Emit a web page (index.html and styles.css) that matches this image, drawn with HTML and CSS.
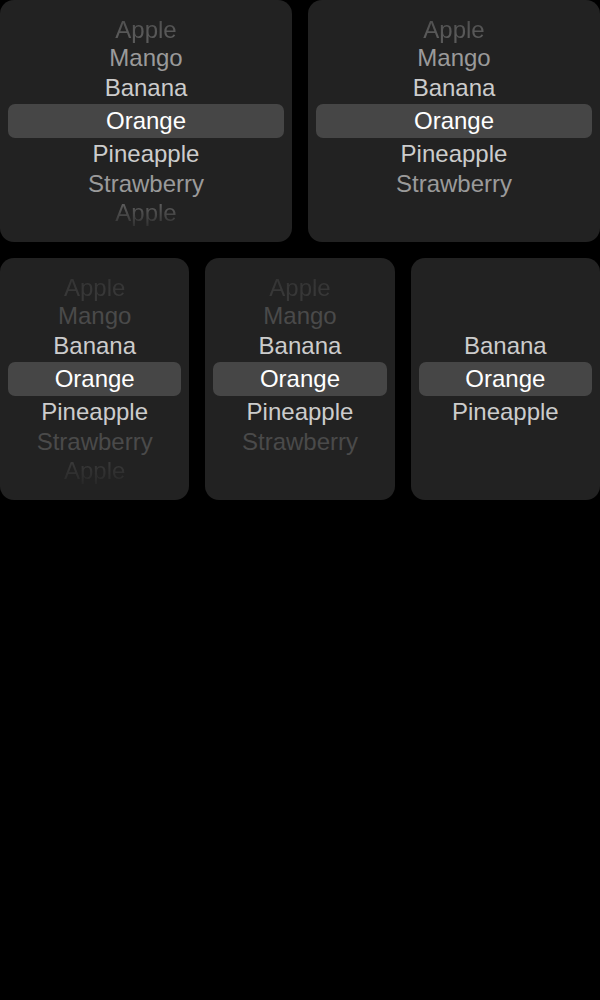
FILE: index.html
```html
<!DOCTYPE html>
<html lang="en">
<head>
<meta charset="utf-8">
<title>Pickers</title>
<link rel="stylesheet" href="styles.css">
</head>
<body>
<div class="page">
  <div class="row">
    <div class="picker loop">
      <div class="item r3 top c3">Apple</div>
      <div class="item r2 c2">Mango</div>
      <div class="item r1 c1">Banana</div>
      <div class="item sel">Orange</div>
      <div class="item r1 c1">Pineapple</div>
      <div class="item r2 c2">Strawberry</div>
      <div class="item r3 bottom c3">Apple</div>
    </div>
    <div class="picker">
      <div class="item r3 top c3">Apple</div>
      <div class="item r2 c2">Mango</div>
      <div class="item r1 c1">Banana</div>
      <div class="item sel">Orange</div>
      <div class="item r1 c1">Pineapple</div>
      <div class="item r2 c2">Strawberry</div>
      <div class="item r3 empty"></div>
    </div>
  </div>
  <div class="row">
    <div class="picker dim">
      <div class="item r3 top c3">Apple</div>
      <div class="item r2 c2">Mango</div>
      <div class="item r1 c1">Banana</div>
      <div class="item sel">Orange</div>
      <div class="item r1 c1">Pineapple</div>
      <div class="item r2 c2">Strawberry</div>
      <div class="item r3 bottom c3">Apple</div>
    </div>
    <div class="picker dim">
      <div class="item r3 top c3">Apple</div>
      <div class="item r2 c2">Mango</div>
      <div class="item r1 c1">Banana</div>
      <div class="item sel">Orange</div>
      <div class="item r1 c1">Pineapple</div>
      <div class="item r2 c2">Strawberry</div>
      <div class="item r3 empty"></div>
    </div>
    <div class="picker">
      <div class="item r3 empty"></div>
      <div class="item r2 empty"></div>
      <div class="item r1 c1">Banana</div>
      <div class="item sel">Orange</div>
      <div class="item r1 c1">Pineapple</div>
      <div class="item r2 empty"></div>
      <div class="item r3 empty"></div>
    </div>
  </div>
</div>
</body>
</html>
```

FILE: styles.css
```css
html, body {
  margin: 0;
  padding: 0;
  background: #000;
}

.page {
  width: 600px;
  display: flex;
  flex-direction: column;
  gap: 16px;
}

.row {
  display: flex;
  gap: 16px;
}

.picker {
  flex: 1 1 0;
  height: 242px;
  background: #222222;
  border-radius: 14px;
  display: flex;
  flex-direction: column;
  justify-content: center;
  font-family: "Liberation Sans", Arial, sans-serif;
  font-size: 24px;
  text-align: center;
  overflow: hidden;
}

.item {
  white-space: nowrap;
}

.r1 { height: 32px; line-height: 32px; }
.r2 { height: 28px; line-height: 28px; }
.r3 { height: 29px; line-height: 29px; }

.sel {
  height: 34px;
  line-height: 34px;
  margin: 0 8px;
  background: #464646;
  border-radius: 7px;
  color: #ffffff;
}

.c1 { color: #cccccc; }
.c2 { color: #9a9a9a; }
.c3 { color: #5a5a5a; }

.dim .c2 { color: #4a4a4a; }
.dim .c3 { color: #383838; }

.top {
  -webkit-mask-image: linear-gradient(to bottom, rgba(0,0,0,0.75), #000 70%);
  mask-image: linear-gradient(to bottom, rgba(0,0,0,0.75), #000 70%);
}

.bottom {
  -webkit-mask-image: linear-gradient(to bottom, #000 25%, rgba(0,0,0,0.25));
  mask-image: linear-gradient(to bottom, #000 25%, rgba(0,0,0,0.25));
}
```
